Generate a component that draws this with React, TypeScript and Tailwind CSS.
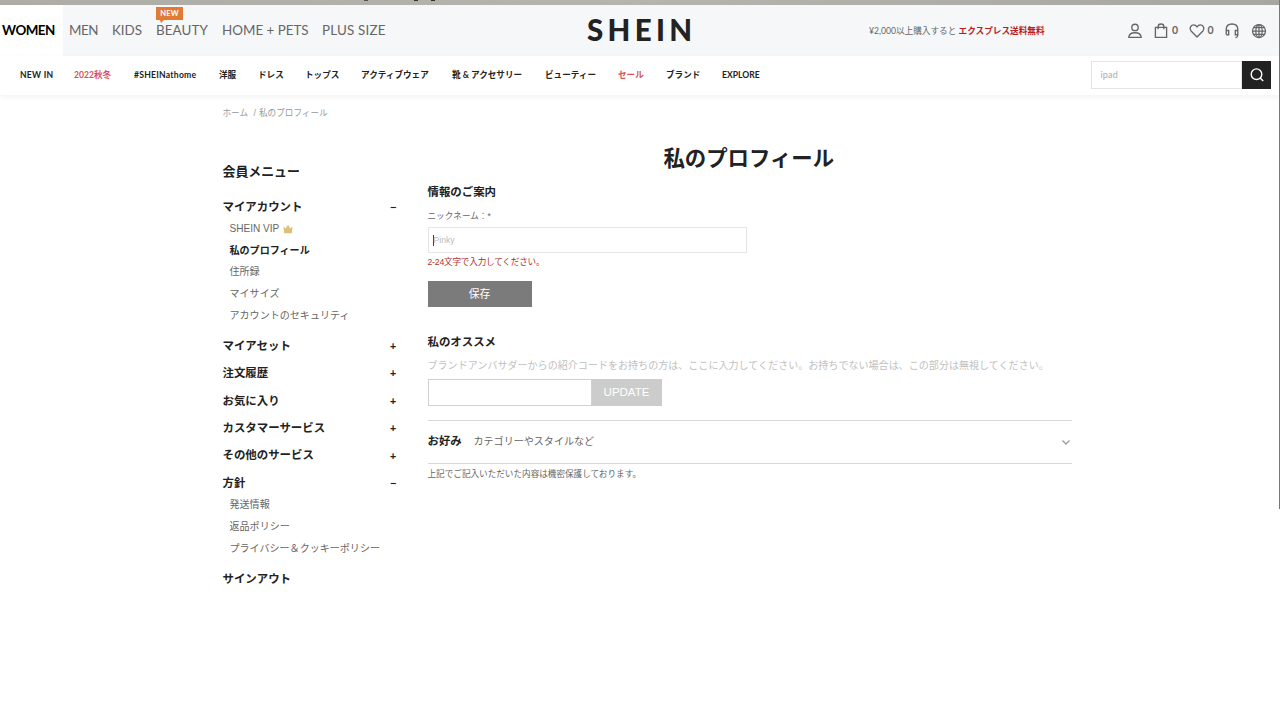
import React from "react";

type NavItem = { label: string; width: string; red?: boolean; wide?: boolean };

const topTabs = [
  { label: "MEN", width: "w-[43px]", track: "tracking-[-0.5px]" },
  { label: "KIDS", width: "w-[44px]", track: "" },
  { label: "BEAUTY", width: "w-[66px]", track: "tracking-[0.1px]", badge: true },
  { label: "HOME + PETS", width: "w-[100px]", track: "" },
  { label: "PLUS SIZE", width: "w-[70px]", track: "tracking-[0.2px]" },
];

const categories: NavItem[] = [
  { label: "NEW IN", width: "w-[54px]", wide: true },
  { label: "2022秋冬", width: "w-[60px]", red: true },
  { label: "#SHEINathome", width: "w-[85px]", wide: true },
  { label: "洋服", width: "w-[39px]" },
  { label: "ドレス", width: "w-[47px]" },
  { label: "トップス", width: "w-[56px]" },
  { label: "アクティブウェア", width: "w-[91px]" },
  { label: "靴 & アクセサリー", width: "w-[93px]" },
  { label: "ビューティー", width: "w-[73px]" },
  { label: "セール", width: "w-[48px]", red: true },
  { label: "ブランド", width: "w-[56px]" },
  { label: "EXPLORE", width: "w-[60px]" },
];

type Group = { title: string; sign?: string; items?: string[] };

const menu: Group[] = [
  {
    title: "マイアカウント",
    sign: "−",
    items: ["SHEIN VIP", "私のプロフィール", "住所録", "マイサイズ", "アカウントのセキュリティ"],
  },
  { title: "マイアセット", sign: "+" },
  { title: "注文履歴", sign: "+" },
  { title: "お気に入り", sign: "+" },
  { title: "カスタマーサービス", sign: "+" },
  { title: "その他のサービス", sign: "+" },
  { title: "方針", sign: "−", items: ["発送情報", "返品ポリシー", "プライバシー＆クッキーポリシー"] },
  { title: "サインアウト" },
];

function Crown() {
  return (
    <svg className="ml-[4px] h-[10px] w-[10px]" viewBox="0 0 10 10" fill="#dcc078">
      <path d="M0.3 2.8 L2.7 4.5 L5 0.8 L7.3 4.5 L9.7 2.8 L8.8 9.2 H1.2 Z" />
    </svg>
  );
}

function HeaderIcons() {
  return (
    <div className="flex h-[16px] items-center text-[10.5px] font-bold text-[#666]">
      <svg className="w-[16px] h-[16px]" viewBox="0 0 16 16" fill="none" stroke="#666" strokeWidth="1.35">
        <circle cx="8" cy="4.4" r="3.2" />
        <path d="M1.8 14.3 C2 11 4.2 9.7 8 9.7 C11.8 9.7 14 11 14.2 14.3 Z" />
      </svg>
      <svg className="ml-[10px] w-[16px] h-[16px]" viewBox="0 0 16 16" fill="none" stroke="#666" strokeWidth="1.35">
        <path d="M2.4 4.3 H13.6 V14.3 H2.4 Z M5.1 6.2 V3.7 Q5.1 1 8 1 Q10.9 1 10.9 3.7 V6.2" />
      </svg>
      <span className="ml-[3px] w-[7px]">0</span>
      <svg className="ml-[9.5px] w-[16px] h-[16px]" viewBox="0 0 16 16" fill="none" stroke="#666" strokeWidth="1.35" strokeLinejoin="round">
        <path d="M8 14 L2.3 8.2 C0.3 6 1.2 2 4.5 1.9 C6.2 1.85 7.3 2.8 8 4 C8.7 2.8 9.8 1.85 11.5 1.9 C14.8 2 15.7 6 13.7 8.2 Z" />
      </svg>
      <span className="ml-[3px] w-[7px]">0</span>
      <svg className="ml-[9.500px] w-[16px] h-[16px]" viewBox="0 0 16 16" fill="none" stroke="#666" strokeWidth="1.35">
        <path d="M2.200 11.600 V6.500 C2.200 3 4.600 1 8 1 C11.400 1 13.800 3 13.800 6.500 V12 C13.800 13.700 13 14.400 11.500 14.900 M2.200 7.500 H4.700 V11.700 H2.200 M13.800 7.500 H11.300 V11.700 H13.800" />
      </svg>
      <svg className="ml-[10.500px] w-[16px] h-[16px]" viewBox="0 0 16 16" fill="none" stroke="#666" strokeWidth="1.25">
        <circle cx="8" cy="8" r="6.5" />
        <ellipse cx="8" cy="8" rx="3.2" ry="6.5" />
        <path d="M8 1.5 V14.5 M1.5 8 H14.5 M2.4 4.7 H13.6 M2.4 11.3 H13.6" />
      </svg>
    </div>
  );
}

function Sidebar() {
  return (
    <aside className="w-[175px] shrink-0 text-[#222]">
      <h2 className="mt-[41px] h-[24px] text-[12.9px] leading-[24px] font-bold">会員メニュー</h2>
      <div className="mt-[12.600px] flex flex-col gap-[5.900px]">
        {menu.map((g) => (
          <section key={g.title}>
            <div className="flex h-[21.500px] items-center justify-between text-[11.430px] font-bold">
              <span>{g.title}</span>
              {g.sign && <span className="mt-px w-[7.500px] text-[10.500px]">{g.sign}</span>}
            </div>
            {g.items && (
              <ul className="pb-[4px] pl-[7px] text-[10.050px] text-[#666]">
                {g.items.map((item) => (
                  <li
                    key={item}
                    className={
                      item === "私のプロフィール"
                        ? "flex h-[21.550px] items-center whitespace-nowrap font-bold text-[#222]"
                        : "flex h-[21.550px] items-center whitespace-nowrap"
                    }
                  >
                    {item}
                    {item === "SHEIN VIP" && <Crown />}
                  </li>
                ))}
              </ul>
            )}
          </section>
        ))}
      </div>
    </aside>
  );
}

function Profile() {
  return (
    <main className="ml-[30px] w-[644.500px] text-[#222]">
      <h1 className="mt-[23px] h-[34px] pr-[2px] text-center text-[21.4px] leading-[34px] font-bold">私のプロフィール</h1>
      <h3 className="mt-[7px] h-[18px] text-[11.43px] leading-[18px] font-bold">情報のご案内</h3>
      <label className="mt-[8px] block h-[14px] text-[8.6px] leading-[14px] text-[#666]">ニックネーム：*</label>
      <div className="mt-[4px] flex h-[26px] w-[319px] items-center border border-[#e5e5e5] pl-[4px]">
        <span className="h-[11px] w-px bg-[#444]" />
        <span className="text-[8.6px] text-[#bbb]">Pinky</span>
      </div>
      <p className="mt-[2px] h-[14px] text-[8.6px] leading-[14px] tracking-[-0.18px] text-[#b03028]">2-24文字で入力してください。</p>
      <button className="mt-[12px] flex h-[26px] w-[104px] items-center justify-center bg-[#7b7b7b] text-[10.8px] text-white">保存</button>
      <h3 className="mt-[26px] h-[18px] text-[11.43px] leading-[18px] font-bold">私のオススメ</h3>
      <p className="mt-[6px] h-[18px] text-[10.05px] leading-[18px] whitespace-nowrap text-[#bfbfbf]">
        ブランドアンバサダーからの紹介コードをお持ちの方は、ここに入力してください。お持ちでない場合は、この部分は無視してください。
      </p>
      <div className="mt-[4px] flex h-[27px]">
        <div className="w-[164px] border border-[#d0d0d0]" />
        <button className="flex w-[70px] items-center justify-center bg-[#ccc] text-[11.5px] text-white">UPDATE</button>
      </div>
      <div className="mt-[14px] flex h-[44px] items-center border-y border-[#d8d8d8]">
        <span className="w-[46px] text-[11.43px] font-bold">お好み</span>
        <span className="grow text-[10.05px] text-[#666]">カテゴリーやスタイルなど</span>
        <svg className="mr-px h-[10px] w-[10px]" viewBox="0 0 10 10" fill="none" stroke="#999" strokeWidth="1.3">
          <path d="M1.5 3.5 L5 7 L8.5 3.5" />
        </svg>
      </div>
      <p className="mt-[3px] h-[14px] text-[8.6px] leading-[14px] text-[#666]">上記でご記入いただいた内容は機密保護しております。</p>
    </main>
  );
}

export default function App() {
  return (
    <div className="relative flex h-[720px] w-[1280px] flex-col overflow-hidden bg-white font-['Liberation_Sans','Noto_Sans_CJK_JP',sans-serif]">
      <div className="flex h-[5px] shrink-0 items-start bg-gradient-to-r from-[#adaca6] via-[#b5b4ad] to-[#a7a7a2] pl-[364px]">
        <span className="h-px w-[4px] bg-[#55534e]" />
        <span className="ml-[46px] h-px w-[4px] bg-[#33312e]" />
        <span className="ml-[13px] h-px w-[4px] bg-[#33312e]" />
      </div>
      <header className="flex h-[51px] shrink-0 bg-[#f6f7f9] font-['Lato','Noto_Sans_CJK_JP',sans-serif]">
        <nav className="flex w-[587px] text-[13.4px] leading-[50px] text-[#666]">
          <a className="w-[63px] shrink-0 bg-white pl-[2px] font-bold tracking-[-0.5px] text-black">WOMEN</a>
          <div className="flex pl-[6px]">
            {topTabs.map((t) => (
              <a key={t.label} className={`relative shrink-0 whitespace-nowrap ${t.width} ${t.track}`}>
                {t.label}
                {t.badge && (
                  <span className="absolute top-[2px] left-0 flex h-[13px] w-[27px] items-center justify-center bg-[#e07a35] text-[7.5px] leading-none font-bold text-white">
                    NEW
                    <svg className="absolute top-[13px] left-[4px] h-[3px] w-[4px]" viewBox="0 0 4 3" fill="#e07a35">
                      <path d="M0 0 H4 L1 3 Z" />
                    </svg>
                  </span>
                )}
              </a>
            ))}
          </div>
        </nav>
        <div className="w-[282px] text-[29.500px] leading-[50px] font-black tracking-[4.300px] text-[#222]">SHEIN</div>
        <div className="w-[258px] text-[8.65px] leading-[51px] whitespace-nowrap text-[#666]">
          ¥2,000以上購入すると <b className="text-[#b8201c]">エクスプレス送料無料</b>
        </div>
        <div className="flex items-center">
          <HeaderIcons />
        </div>
      </header>
      <div className="flex h-[39px] shrink-0 items-center bg-white pl-[20px] font-['Lato','Noto_Sans_CJK_JP',sans-serif] shadow-[0_2px_5px_rgba(0,0,0,0.05)]">
        <nav className="flex w-[1070.5px] text-[8.6px] font-bold text-[#222]">
          {categories.map((c) => (
            <a
              key={c.label}
              className={`shrink-0 whitespace-nowrap ${c.width} ${c.red ? "text-[#d9505a]" : ""} ${c.wide ? "tracking-[0.25px]" : ""}`}
            >
              {c.label}
            </a>
          ))}
        </nav>
        <div className="mb-px flex h-[28px] w-[180.5px]">
          <div className="flex grow items-center border border-[#e5e5e5] pl-[9px] text-[9px] tracking-[0.2px] text-[#aaa]">ipad</div>
          <div className="flex w-[29px] items-center justify-center bg-[#222]">
            <svg className="h-[16px] w-[16px]" viewBox="0 0 16 16" fill="none" stroke="white" strokeWidth="1.4">
              <circle cx="7.5" cy="7.2" r="5.3" />
              <path d="M11.2 11 L14.2 14" />
            </svg>
          </div>
        </div>
      </div>
      <div className="flex h-[24px] shrink-0 items-center pt-[12px] pl-[222.5px] text-[8.6px] text-[#999]">
        <span className="w-[31px]">ホーム</span>
        <span className="w-[5.5px]">/</span>
        <span>私のプロフィール</span>
      </div>
      <div className="flex pl-[222.500px]">
        <Sidebar />
        <Profile />
      </div>
      <div className="absolute top-0 right-0 h-[509px] w-[1.5px] bg-[#777]" />
    </div>
  );
}
